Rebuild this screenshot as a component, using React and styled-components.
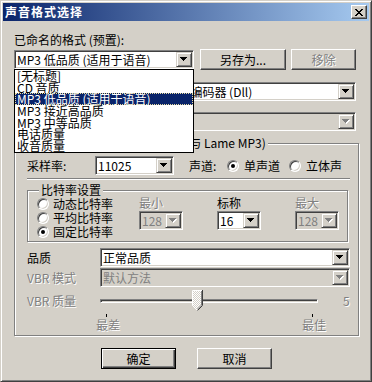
import React from "react";
import styled, { createGlobalStyle, css } from "styled-components";

const GlobalStyle = createGlobalStyle`
  html, body {
    margin: 0;
    padding: 0;
    background: #d4d0c8;
  }
  body {
    font-family: "Noto Sans CJK SC", "Noto Sans", sans-serif;
    font-size: 12px;
  }
  * {
    box-sizing: border-box;
  }
`;

const presets = [
  "[无标题]",
  "CD 音质",
  "MP3 低品质 (适用于语音)",
  "MP3 接近高品质",
  "MP3 中等品质",
  "电话质量",
  "收音质量",
];

const raised = css`
  border: 1px solid;
  border-color: #d4d0c8 #404040 #404040 #d4d0c8;
  box-shadow: inset 1px 1px #fff, inset -1px -1px #808080;
  background: #d4d0c8;
`;

const Window = styled.div`
  position: relative;
  width: 372px;
  height: 382px;
  padding: 2px;
  display: flex;
  flex-direction: column;
  background: #d4d0c8;
  color: #000;
  line-height: 14px;
  border: 1px solid;
  border-color: #d4d0c8 #404040 #404040 #d4d0c8;
  box-shadow: inset 1px 1px #fff, inset -1px -1px #808080;
`;

const TitleBar = styled.div`
  height: 18px;
  display: flex;
  align-items: center;
  padding: 0 2px;
  background: linear-gradient(to right, #0a246a, #a6caf0);
`;

const Title = styled.span`
  color: #fff;
  font-weight: bold;
  letter-spacing: 1px;
`;

const CloseButton = styled.div`
  ${raised};
  margin-left: auto;
  width: 16px;
  height: 14px;
  display: flex;
  align-items: center;
  justify-content: center;
  border-color: #fff #404040 #404040 #fff;
  box-shadow: inset -1px -1px #808080;
`;

const Body = styled.div`
  display: flex;
  flex-direction: column;
  padding: 12px 13px 0 11px;
`;

const FieldLabel = styled.div`
  height: 14px;
  white-space: nowrap;
`;

const PresetRow = styled.div`
  display: flex;
  align-items: center;
  height: 21px;
  margin-top: 2px;
`;

const FormRow = styled.div`
  display: flex;
  align-items: center;
  height: ${(p) => p.$h || 19}px;
  margin-top: ${(p) => p.$top || 0}px;
`;

const RowLabel = styled.span`
  flex: none;
  width: ${(p) => p.$w}px;
  white-space: nowrap;
  ${(p) =>
    p.$disabled &&
    css`
      color: #808080;
      text-shadow: 1px 1px #fff;
    `}
`;

const ComboFrame = styled.div`
  display: flex;
  align-items: center;
  width: ${(p) => (p.$w ? `${p.$w}px` : "auto")};
  flex: ${(p) => (p.$w ? "none" : 1)};
  height: 19px;
  padding: 1px;
  border: 1px solid;
  border-color: #808080 #fff #fff #808080;
  box-shadow: inset 1px 1px #404040, inset -1px -1px #d4d0c8;
  background: ${(p) => (p.$disabled ? "#d4d0c8" : "#fff")};
`;

const ComboText = styled.span`
  flex: 1;
  padding-left: 1px;
  line-height: 15px;
  overflow: hidden;
  white-space: nowrap;
  color: ${(p) => (p.$disabled ? "#808080" : "#000")};
`;

const ArrowButton = styled.span`
  ${raised};
  flex: none;
  width: 16px;
  height: 15px;
  display: flex;
  align-items: center;
  justify-content: center;
`;

const PushButton = styled.button`
  flex: none;
  width: ${(p) => p.$w}px;
  height: 21px;
  margin-left: ${(p) => p.$gap || 0}px;
  padding: 0;
  font: inherit;
  line-height: 14px;
  background: #d4d0c8;
  color: #000;
  border: 1px solid;
  border-color: #fff #404040 #404040 #fff;
  box-shadow: inset -1px -1px #808080;
  &:disabled {
    color: #808080;
    text-shadow: 1px 1px #fff;
  }
  ${(p) =>
    p.$default &&
    css`
      border-color: #000;
      box-shadow: inset 1px 1px #fff, inset -1px -1px #404040,
        inset -2px -2px #808080;
    `}
`;

const GroupBox = styled.div`
  position: relative;
  flex: none;
  border: 1px solid #808080;
  box-shadow: inset 1px 1px #fff, 1px 1px #fff;
`;

const GroupCaption = styled.span`
  position: absolute;
  top: -8px;
  left: ${(p) => p.$left}px;
  padding: 0 2px;
  line-height: 14px;
  white-space: nowrap;
  background: #d4d0c8;
`;

const OuterGroup = styled(GroupBox)`
  width: 345px;
  height: 193px;
  margin-top: 12px;
  padding: 12px 8px 0 12px;
  display: flex;
  flex-direction: column;
`;

const Separator = styled.div`
  height: 2px;
  margin-top: 3px;
  border-top: 1px solid #808080;
  border-bottom: 1px solid #fff;
`;

const BitrateGroup = styled(GroupBox)`
  height: 52px;
  margin: 10px 2px 0 0;
  padding: 5px 0 0 9px;
  display: flex;
  align-items: flex-start;
`;

const RadioColumn = styled.div`
  width: 102px;
  margin-top: 1px;
  display: flex;
  flex-direction: column;
`;

const RadioOption = styled.label`
  display: flex;
  align-items: center;
  gap: ${(p) => p.$gap || 4}px;
  height: 14px;
  margin-left: ${(p) => p.$left || 0}px;
  white-space: nowrap;
`;

const RadioDot = styled.span`
  flex: none;
  width: 12px;
  height: 12px;
  border-radius: 50%;
  display: flex;
  align-items: center;
  justify-content: center;
  background: #fff;
  border: 1px solid;
  border-color: #808080 #fff #fff #808080;
  box-shadow: inset 1px 1px #404040, inset -1px -1px #d4d0c8;
  &::after {
    content: "";
    display: ${(p) => (p.$checked ? "block" : "none")};
    width: 4px;
    height: 4px;
    border-radius: 50%;
    background: #000;
  }
`;

const RateColumns = styled.div`
  display: flex;
  gap: 34px;
`;

const RateColumn = styled.div`
  width: 44px;
  display: flex;
  flex-direction: column;
  gap: 1px;
`;

const SliderBox = styled.div`
  position: relative;
  flex: none;
  width: 218px;
  height: 22px;
  display: flex;
  align-items: center;
`;

const Track = styled.div`
  flex: 1;
  height: 4px;
  border: 1px solid;
  border-color: #808080 #fff #fff #808080;
  box-shadow: inset 1px 1px #404040;
`;

const Thumb = styled.svg`
  position: absolute;
  top: 0;
`;

const SliderValue = styled.span`
  margin-left: 25px;
  color: #808080;
  text-shadow: 1px 1px #fff;
`;

const Scale = styled.div`
  width: 230px;
  margin: 2px 0 0 69px;
  display: flex;
  justify-content: space-between;
`;

const ScaleMark = styled.div`
  width: 24px;
  display: flex;
  flex-direction: column;
`;

const Tick = styled.span`
  width: 1px;
  height: 3px;
  margin-left: 10px;
  background: #000;
`;

const ScaleLabel = styled.span`
  margin-top: 1px;
  white-space: nowrap;
  color: #808080;
  text-shadow: 1px 1px #fff;
`;

const ButtonRow = styled.div`
  display: flex;
  justify-content: center;
  padding-left: 3px;
  margin-top: 12px;
`;

const DropList = styled.div`
  position: absolute;
  left: 13px;
  top: 68px;
  width: 180px;
  border: 1px solid #000;
  background: #fff;
`;

const ListItem = styled.div`
  height: 11.7px;
  line-height: 11.7px;
  padding-left: 2px;
  white-space: nowrap;
  ${(p) =>
    p.$selected &&
    css`
      background: #0a246a;
      color: #fff;
      outline: 1px dotted #e8dca0;
      outline-offset: -1px;
    `}
`;

const CloseGlyph = () => (
  <svg width="8" height="7" viewBox="0 0 8 7" shapeRendering="crispEdges">
    <path
      fill="#000"
      d="M0 0h2v1H0zM6 0h2v1H6zM1 1h2v1H1zM5 1h2v1H5zM2 2h4v1H2zM3 3h2v1H3zM2 4h4v1H2zM1 5h2v1H1zM5 5h2v1H5zM0 6h2v1H0zM6 6h2v1H6z"
    />
  </svg>
);

const arrowPath = "M0 0h7v1H0zM1 1h5v1H1zM2 2h3v1H2zM3 3h1v1H3z";

const Arrow = ({ disabled }) => (
  <svg width="8" height="5" viewBox="0 0 8 5" shapeRendering="crispEdges">
    {disabled && <path fill="#fff" transform="translate(1 1)" d={arrowPath} />}
    <path fill={disabled ? "#808080" : "#000"} d={arrowPath} />
  </svg>
);

const Combo = ({ width, value, disabled }) => (
  <ComboFrame $w={width} $disabled={disabled}>
    <ComboText $disabled={disabled}>{value}</ComboText>
    <ArrowButton>
      <Arrow disabled={disabled} />
    </ArrowButton>
  </ComboFrame>
);

const Radio = ({ label, checked, left, gap }) => (
  <RadioOption $left={left} $gap={gap}>
    <RadioDot $checked={checked} />
    {label}
  </RadioOption>
);

const SliderThumb = ({ left }) => (
  <Thumb width="11" height="21" viewBox="0 0 11 21" style={{ left }}>
    <defs>
      <pattern id="dither" width="2" height="2" patternUnits="userSpaceOnUse">
        <rect width="2" height="2" fill="#fff" />
        <rect width="1" height="1" fill="#d4d0c8" />
        <rect x="1" y="1" width="1" height="1" fill="#d4d0c8" />
      </pattern>
    </defs>
    <path d="M0.5 0.5H10.5V15.5L5.5 20.5L0.5 15.5Z" fill="url(#dither)" />
    <path d="M0.5 15.5V0.5H10" stroke="#fff" fill="none" />
    <path d="M0.5 15.5L5.5 20.5" stroke="#fff" fill="none" />
    <path d="M10.5 0V15.5L5.5 20.5" stroke="#404040" fill="none" />
    <path d="M9.5 1V15L5.5 19" stroke="#808080" fill="none" />
  </Thumb>
);

const quality = { value: 4, max: 9 };

export default function App() {
  const thumbLeft = Math.round((quality.value / quality.max) * (218 - 11));
  return (
    <>
      <GlobalStyle />
      <Window>
        <TitleBar>
          <Title>声音格式选择</Title>
          <CloseButton>
            <CloseGlyph />
          </CloseButton>
        </TitleBar>

        <Body>
          <FieldLabel>已命名的格式 (预置):</FieldLabel>
          <PresetRow>
            <Combo width={180} value="MP3 低品质 (适用于语音)" />
            <PushButton $w={86} $gap={6}>
              另存为...
            </PushButton>
            <PushButton $w={65} $gap={5} disabled>
              移除
            </PushButton>
          </PresetRow>

          <FormRow $top={12}>
            <RowLabel $w={113}>编码器:</RowLabel>
            <Combo value="Lame MP3 编码器 (Dll)" />
          </FormRow>
          <FormRow $top={11}>
            <RowLabel $w={113} $disabled>
              属性:
            </RowLabel>
            <Combo value="" disabled />
          </FormRow>

          <OuterGroup>
            <GroupCaption $left={8}>
              编码器格式属性 (仅用于 Blade 与 Lame MP3)
            </GroupCaption>

            <FormRow>
              <RowLabel $w={68}>采样率:</RowLabel>
              <Combo width={79} value="11025" />
              <RowLabel $w={38} style={{ marginLeft: 15 }}>
                声道:
              </RowLabel>
              <Radio label="单声道" checked gap={5} />
              <Radio label="立体声" left={9} gap={5} />
            </FormRow>

            <Separator />

            <BitrateGroup>
              <GroupCaption $left={11}>比特率设置</GroupCaption>
              <RadioColumn>
                <Radio label="动态比特率" />
                <Radio label="平均比特率" />
                <Radio label="固定比特率" checked />
              </RadioColumn>
              <RateColumns>
                <RateColumn>
                  <RowLabel $disabled>最小</RowLabel>
                  <Combo width={44} value="128" disabled />
                </RateColumn>
                <RateColumn>
                  <RowLabel>标称</RowLabel>
                  <Combo width={44} value="16" />
                </RateColumn>
                <RateColumn>
                  <RowLabel $disabled>最大</RowLabel>
                  <Combo width={44} value="128" disabled />
                </RateColumn>
              </RateColumns>
            </BitrateGroup>

            <FormRow $top={6}>
              <RowLabel $w={73}>品质</RowLabel>
              <Combo value="正常品质" />
            </FormRow>
            <FormRow $top={1}>
              <RowLabel $w={73} $disabled>
                VBR 模式
              </RowLabel>
              <Combo value="默认方法" disabled />
            </FormRow>
            <FormRow $top={3} $h={22}>
              <RowLabel $w={73} $disabled>
                VBR 质量
              </RowLabel>
              <SliderBox>
                <Track />
                <SliderThumb left={thumbLeft} />
              </SliderBox>
              <SliderValue>5</SliderValue>
            </FormRow>
            <Scale>
              <ScaleMark>
                <Tick />
                <ScaleLabel>最差</ScaleLabel>
              </ScaleMark>
              <ScaleMark>
                <Tick />
                <ScaleLabel>最佳</ScaleLabel>
              </ScaleMark>
            </Scale>
          </OuterGroup>

          <ButtonRow>
            <PushButton $w={75} $default>
              确定
            </PushButton>
            <PushButton $w={75} $gap={21}>
              取消
            </PushButton>
          </ButtonRow>
        </Body>

        <DropList>
          {presets.map((name) => (
            <ListItem key={name} $selected={name === presets[2]}>
              {name}
            </ListItem>
          ))}
        </DropList>
      </Window>
    </>
  );
}
